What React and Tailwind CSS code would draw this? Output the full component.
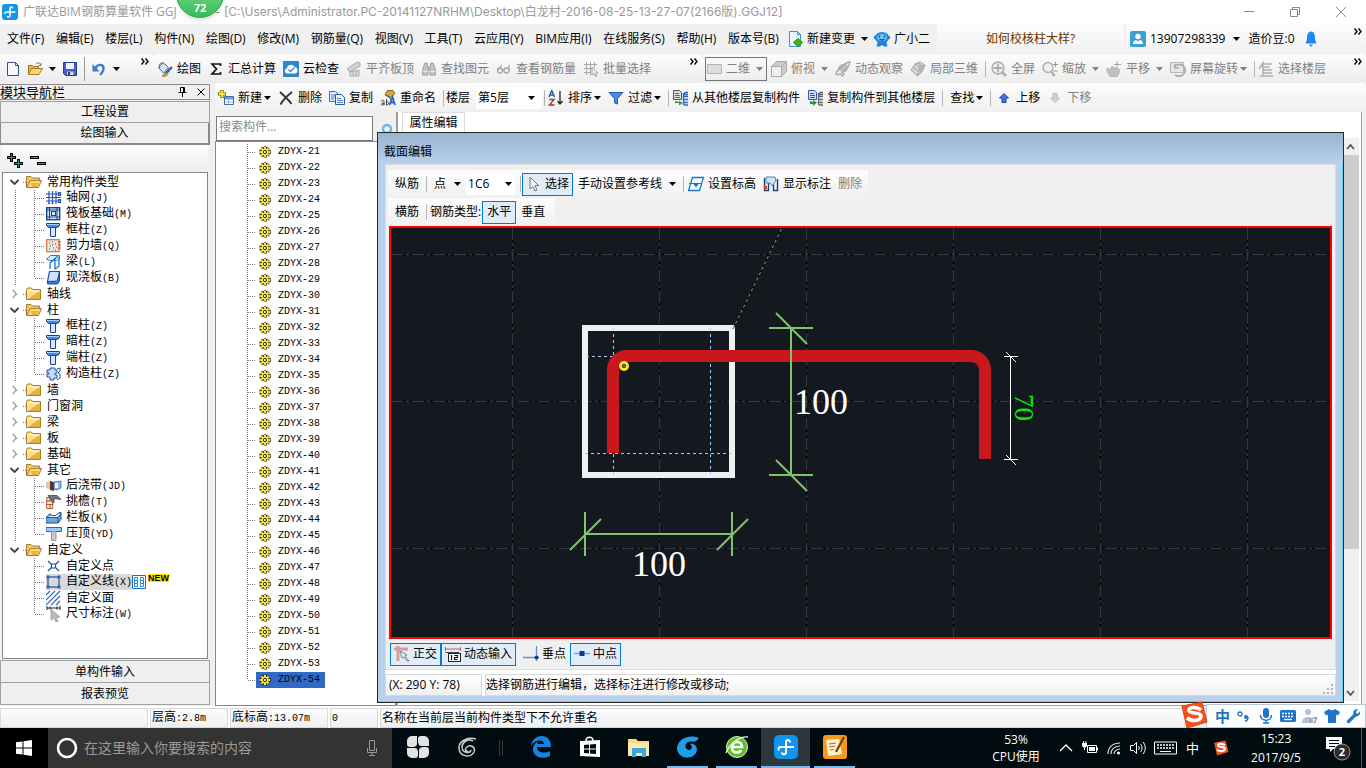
import React, { useState } from 'react';

// 16x16 drawings shared by the toolbars and trees
const icons = {
  app: (
    <>
      <rect width="16" height="16" rx="3" fill="#1495ea" />
      <path d="M10.5 4.5C10.5 2.5 8 2.500 8 4.5V11.5C8 13.5 5.5 13.5 5.5 12M3 10C2.500 8 3.500 8 5 8H13.500" fill="none" stroke="#fff" strokeWidth="1.5" />
    </>
  ),
  doc: <path d="M2.5 1.5h8l3 3v10h-11zM10.5 1.5v3h3" fill="#f4f8ff" stroke="#3d4f7c" />,
  open: (
    <>
      <path d="M1.5 13V4.5h4l1 1h5V7" fill="#e8b94c" stroke="#9a7420" />
      <path d="M1.5 13.5L4.5 7.5h11l-3.5 6z" fill="#fbd972" stroke="#a37c25" />
      <path d="M9 3c2-2 4-1 5 1m0-2v2.5h-2.5" fill="none" stroke="#66768e" />
    </>
  ),
  save: (
    <>
      <path d="M1.5 1.5h13v13h-11l-2-2z" fill="#4b5cc4" stroke="#2c3b8f" />
      <path d="M4 2h8v6H4z" fill="#eef1ff" />
      <path d="M5 10.5h6.5V14H5z" fill="#cfd4ea" />
      <path d="M6 11h2v3H6z" fill="#2c3b8f" />
    </>
  ),
  undo: (
    <>
      <path d="M4.5 7.5C6 3 12 2.5 12.5 7c.3 3-1.5 5-3.5 7" fill="none" stroke="#3f78cf" strokeWidth="2.4" />
      <path d="M1.5 3v7.5h7z" fill="#3f78cf" />
    </>
  ),
  paint: (
    <>
      <path d="M1.5 6.5L6 1.5l5.5 5-5 5.5z" fill="#dbe5f5" stroke="#44699d" />
      <path d="M3 7C1 4 4 0 6.5 3" fill="none" stroke="#44699d" />
      <path d="M11 7c2 1 2 4 1 5-1-1-2-3-1-5z" fill="#4d86d6" />
      <path d="M15 6l-7 7" stroke="#2f63b5" strokeWidth="2.4" />
      <path d="M9 11.5l2 2-4 2.5-2-1z" fill="#d8a73c" stroke="#7b5b1b" strokeWidth=".6" />
    </>
  ),
  sigma: <path d="M12.5 5V3H4l4.5 5L4 13h8.500v-2" fill="none" stroke="#111" strokeWidth="1.7" />,
  cloud: (
    <>
      <rect width="16" height="16" rx="1" fill="#2a87cc" />
      <path d="M4.5 12.5C1 12.5 1 8 4 7.5c0-4 6-5 7.5-1.5 4 0 4 6.5.5 6.5z" fill="#fff" />
      <path d="M5.5 8.5l2 2 4-4" fill="none" stroke="#2a87cc" strokeWidth="1.4" />
    </>
  ),
  slab: (
    <>
      <path d="M1 8L11 1l3 1v3L4 11z" fill="#d2d2d2" stroke="#aaa" />
      <path d="M4 11v4h9V9l-9 2zM7 10.5V15M10 9.5V15" fill="#dedede" stroke="#a8a8a8" />
    </>
  ),
  find: (
    <>
      <path d="M2 7l2-5h2l1 4v8H1.5zM14 7l-2-5h-2L9 6v8h5.5z" fill="#c6c6c6" stroke="#9c9c9c" />
      <path d="M7 6h2v3H7z" fill="#aaa" />
      <path d="M2 10.5h4.5M9.5 10.5H14" stroke="#eee" />
    </>
  ),
  glasses: (
    <>
      <circle cx="4" cy="9.5" r="2.5" fill="none" stroke="#a3a3a3" strokeWidth="1.3" />
      <circle cx="10.5" cy="9.5" r="2.5" fill="none" stroke="#a3a3a3" strokeWidth="1.3" />
      <path d="M2 9L6 4M13 9V4M6.5 9H8" fill="none" stroke="#a3a3a3" strokeWidth="1.2" />
    </>
  ),
  batch: (
    <>
      <path d="M1 3.5h13M1 7.5h10M1 11.5h7M3.5 1v13M7.5 1v13M11.5 1v6" stroke="#a9a9a9" fill="none" />
      <path d="M9 6l6 6h-2.5l1.5 3-1.5.5-1.5-3L9 14z" fill="#eee" stroke="#999" strokeWidth=".8" />
    </>
  ),
  flat: <path d="M1.5 3.5h14v9h-14z" fill="#dedede" stroke="#b2b2b2" />,
  cube: (
    <>
      <path d="M.5 5.5h10v10H.5z" fill="#f0f0f0" stroke="#a9a9a9" />
      <path d="M.5 5.5l5-5h10l-5 5zM10.5 15.5l5-5V.5l-5 5z" fill="#cbcbcb" stroke="#a9a9a9" />
    </>
  ),
  orbit: (
    <>
      <path d="M4 5c3-3 8-3 9 0 1 4-3 7-6 6S2 8 4 5z" fill="#bdbdbd" />
      <path d="M15 1C11 1 2 8 1 13c3 3 13-5 14-12zM9 12c0 2-1 3-3 3" fill="none" stroke="#a6a6a6" strokeWidth="1.3" />
    </>
  ),
  part3d: (
    <>
      <path d="M1 9l4-6 5-2 5 3-3 7-5 4z" fill="#d4d4d4" stroke="#a6a6a6" />
      <path d="M5 3l5 3 5-2M10 6l-3 9M3 6l5 4 6-3M7.5 2l5 3-3 8" fill="none" stroke="#a6a6a6" />
    </>
  ),
  full: (
    <>
      <circle cx="7" cy="7" r="6" fill="#ededed" stroke="#ababab" strokeWidth="1.3" />
      <path d="M11 11l4 4" stroke="#ababab" strokeWidth="2.5" />
      <path d="M7 2.5v9M2.5 7h9" stroke="#999" strokeWidth="1.3" />
    </>
  ),
  zoom: (
    <>
      <circle cx="6" cy="6.5" r="5" fill="#ededed" stroke="#ababab" strokeWidth="1.3" />
      <path d="M9.5 11l3 4" stroke="#ababab" strokeWidth="2.5" />
      <path d="M13.5 1v5M11 3.500h5M11.5 10h4" stroke="#999" />
    </>
  ),
  pan: (
    <>
      <path d="M1 8c1-2 2 0 4 1 0-5 2-5 3-1 1-2 3-1 3 0 2-1 3 1 2 4l-2 4H5C3 13 0 11 1 8z" fill="#c0c0c0" stroke="#a3a3a3" strokeWidth=".7" />
      <path d="M11 0v7M8 3.500h7" stroke="#a3a3a3" />
    </>
  ),
  rotate: (
    <>
      <path d="M.5 1.500h13v10H.5z" fill="#e6e6e6" stroke="#b5b5b5" />
      <path d="M5 14c6 3 11-1 10-6-1-5-8-6-10-2m0-3v4h4" fill="none" stroke="#aaa" strokeWidth="1.7" />
    </>
  ),
  floors: <path d="M5 3h9M4 6h8M5 9h9M5 12h9M3 15h12M1 8l4-6v13H1.5" fill="none" stroke="#b0b0b0" strokeWidth="1.5" />,
  create: (
    <>
      <path d="M6.5 6.5h9v8h-9z" fill="#fff" stroke="#3c66a8" />
      <path d="M7 7h8v2.500H7z" fill="#6d9be0" />
      <path d="M7 12h8M10.5 9v5.500" stroke="#9ab6df" />
      <path d="M4 0v8M0 4h8" stroke="#9a7b00" strokeWidth="3.6" />
      <path d="M4 1v6M1 4h6" stroke="#ffe34d" strokeWidth="2" />
    </>
  ),
  cross: <path d="M2 2c3 3 8 7 11.500 12M14 2C9 6 5 10 2.500 14.500" fill="none" stroke="#333" strokeWidth="1.9" />,
  copy: (
    <>
      <path d="M.5 1.5h6l3 3v7h-9z" fill="#e1edff" stroke="#4168ad" />
      <path d="M6.5 4.5h6l3 3v7h-9z" fill="#eff6ff" stroke="#31579c" />
      <path d="M2 5h4M2 7h4M2 9h3M8 8.5h4M8 10.5h6M8 12.5h6" stroke="#4f80cf" />
    </>
  ),
  rename: (
    <>
      <path d="M5 4.500L7.500 .5H13l2 3-4 4z" fill="#d9a531" stroke="#6b5215" strokeWidth=".8" />
      <path d="M5 5l4 2 3 4" fill="none" stroke="#555" />
      <path d="M1 11.5c1-2 3-1.500 3 0V15M4 13c-3 0-3.500 2-1.500 2S4 14 4 13M6.5 9v6c3 0 3-4 0-3.500" fill="none" stroke="#444" />
      <path d="M9.5 15l3-8 2.500 8M10.5 12.5h4" fill="none" stroke="#2465c4" strokeWidth="1.8" />
    </>
  ),
  sort: (
    <>
      <path d="M1 7l2.800-6.500L6.500 7M2.500 5h3" fill="none" stroke="#2d549f" strokeWidth="1.4" />
      <path d="M1.500 9.500H6l-4.500 5.500H6.500" fill="none" stroke="#a33636" strokeWidth="1.4" />
      <path d="M12 1v12M9.5 11l2.500 3 2.500-3" fill="none" stroke="#222" strokeWidth="1.3" />
    </>
  ),
  funnel: <path d="M1 2.500h14L9.500 8.500V14L6.500 13V8.500z" fill="#4c8be8" stroke="#2459ab" />,
  fromFloor: (
    <>
      <path d="M1.5 .5h6l2 2v7h-8z" fill="#ddd" stroke="#555" />
      <path d="M3 3.5h4M3 5.5h5M3 7.5h5" stroke="#666" />
      <path d="M16 2.5h-3l-1 2h4M16 6.5h-4M16 9.5h-4M16 12.5h-4M16 15h-4M11.5 3v12" fill="none" stroke="#3367bd" strokeWidth="1.4" />
      <path d="M3 11v2h4v2.500L10.500 13 7 10.500V12" fill="#1e9d3a" />
    </>
  ),
  toFloor: (
    <>
      <path d="M1.5 .5h6l2 2v7h-8z" fill="#cfe0ff" stroke="#2e57b5" />
      <path d="M3 3.5h4M3 5.5h5M3 7.5h5" stroke="#2e57b5" />
      <path d="M16 2.5h-3l-1 2h4M16 6.5h-4M16 9.5h-4M16 12.5h-4M16 15h-4M11.5 3v12" fill="none" stroke="#666" strokeWidth="1.4" />
      <path d="M3 11v3h3v2l4-3.500L6 10v2" fill="#1e9d3a" />
    </>
  ),
  up: <path d="M8 3.500l4.500 4.500H10v4.500H6V8H3.500z" fill="#3f77e0" stroke="#1d4aa5" />,
  down: <path d="M8 12.500L3.500 8H6V3.500h4V8h2.500z" fill="#d0d0d0" stroke="#b9b9b9" />,
  change: (
    <>
      <path d="M2.5 .5h8l3 3v12h-11z" fill="#e9f6fd" stroke="#3c92c4" />
      <path d="M10.5 .5v3h3" fill="none" stroke="#3c92c4" />
      <path d="M11 7.500l4.500 4-4.500 4-4.500-4z" fill="#48b41c" stroke="#2c7b0d" />
    </>
  ),
  mascot: (
    <>
      <path d="M0 5h2v3H0zM14 5h2v3h-2z" fill="#1c86d8" />
      <ellipse cx="8" cy="6.5" rx="7" ry="5.5" fill="#1c86d8" />
      <path d="M4 9h8l1.500 6.500H10L8 14l-2 1.500H2.500z" fill="#1c86d8" />
      <ellipse cx="8" cy="6.5" rx="5" ry="3.5" fill="#6fc4f7" />
      <path d="M5.500 4.500v2M10.500 4.500v2M5.500 8q2.500 2 5 0" fill="none" stroke="#0b4c86" strokeWidth="1.3" />
    </>
  ),
  user: (
    <>
      <rect width="16" height="16" rx="2" fill="#3a9fd3" />
      <circle cx="8" cy="5.5" r="2.7" fill="#fff" />
      <path d="M3 13c0-3 2-4 3-4l2 1.500L10 9c1 0 3 1 3 4z" fill="#fff" />
    </>
  ),
  bell: <path d="M8 .5C4.500 1 4 4 4 8c0 2-1.500 3-1.500 4.500h11C13.500 11 12 10 12 8c0-4-.5-7-4-7.500zM6 13.500h4L8 16z" fill="#1e88f5" />,
  folder: (
    <>
      <path d="M.5 3.5l1-1.500h4l1 1.500h8v10H.5z" fill="#fbe08f" stroke="#a67c2b" />
      <path d="M14 4.500V13H2z" fill="#e9b13c" />
      <path d="M1 5h13" stroke="#fff3c4" />
    </>
  ),
  folderOpen: (
    <>
      <path d="M.5 13.500v-11h4.500l1.500 1.500h7v3" fill="#f0c86b" stroke="#a67c2b" />
      <path d="M.8 13.500L4 6.500h11.500l-3 7z" fill="#fbd979" stroke="#a67c2b" />
      <path d="M5 9h8l-2 4H6z" fill="#e9b445" />
    </>
  ),
  axis: (
    <path d="M3 1v13M6.5 1v13M10 1v13M0 4h15M0 7.500h15M0 11h15M12.5 2.500h2v3h-2zM12.5 9.500h2v3h-2zM2 13.500h2M5.5 13.500h2" fill="none" stroke="#2a50b8" strokeWidth="1.2" />
  ),
  raft: (
    <>
      <rect x=".7" y="1.7" width="13" height="12" fill="#dce9ff" stroke="#124a92" strokeWidth="1.4" />
      <path d="M1 4h13M1 11h13M3.500 2v12M11 2v12M5.500 5.500h4v4h-4z" fill="none" stroke="#124a92" strokeWidth="1.1" />
    </>
  ),
  column: (
    <>
      <path d="M.5 1.500h13v2l-2 2h-9l-2-2z" fill="#4a86e8" stroke="#19439a" />
      <path d="M1 2.500h12" stroke="#a9cbff" />
      <path d="M4.500 5.500h5v9h-5z" fill="#d8e8ff" stroke="#19439a" />
    </>
  ),
  shear: (
    <>
      <rect x=".7" y="1.7" width="12.500" height="12" fill="#e9e4e0" stroke="#d1763f" strokeWidth="1.2" />
      <path d="M3 5h1M6 4h1M9 6h1M4 8h1M7 10h1M10 9h1M3 11h1M6 7h1M9 12h1" stroke="#555" />
      <path d="M12 4h3M12 7h3M12 10h3" stroke="#b04c1b" />
    </>
  ),
  beam: (
    <>
      <path d="M.5 5l4-3.500h9v3l-3 2h-7z" fill="#d7ecff" stroke="#2079c8" />
      <path d="M5 8l7-6M4 15v-6l5-4v10l4-3V3" fill="none" stroke="#2079c8" strokeWidth="1.3" />
    </>
  ),
  cast: (
    <>
      <path d="M3.500 1.500h10l-2 10h-10z" fill="#cfe3ff" stroke="#1b4fb0" strokeWidth="1.2" />
      <path d="M1.500 11.500v2.500h10l2-3v-9l-2 9z" fill="#3c78dc" stroke="#1b4fb0" />
    </>
  ),
  structural: (
    <>
      <path d="M4 2h5v2h2v3H9v2h2v3H8v2H4v-3H1V8h2V7H1V4h3z" fill="#c4daf8" stroke="#26549f" />
      <path d="M11 3l3-1v3l-2 2 2 1v4l-3 2" fill="none" stroke="#26549f" />
    </>
  ),
  postcast: (
    <>
      <path d="M0 4l5-1v9l-5-2z" fill="#e2c4a9" />
      <path d="M4 3l4 1v9l-4-1z" fill="#5b3520" />
      <path d="M8 4l7-1v7l-4 2-3-1z" fill="#8fb6e8" stroke="#345f9e" strokeWidth=".7" />
      <path d="M9 5h3v5H9z" fill="#eef5ff" />
    </>
  ),
  eaves: (
    <>
      <path d="M.7 3.500h6v11h-6zM1 7h6M1 10.500h6M4 3.500V7M4 10.500V14" fill="#fbe3d4" stroke="#b5542a" />
      <path d="M2 1.500h9l4 4-7-1v4h-1z" fill="#777" stroke="#333" strokeWidth=".7" />
    </>
  ),
  rail: <path d="M0 7.500l4-4 2 2h4l3-3h2v7l-3 3.500H0zM12 7v6M0 7.500h12l3-4" fill="#6fa8dd" stroke="#1d558f" />,
  cap: (
    <>
      <path d="M0 1.500h15.500v4H0z" fill="#9dcbff" stroke="#2467b9" />
      <path d="M5.500 5.500h4.500v9H5.500z" fill="#c9c9c9" stroke="#999" />
    </>
  ),
  point: <path d="M2 3l3.500 3.500M13 3L9.500 6.500M2 13l3.500-3.500M13 13L9.500 9.500M5.500 6h4v4h-4z" fill="none" stroke="#1b4fa5" strokeWidth="1.2" />,
  line: (
    <>
      <rect x="2" y="3" width="11" height="10" fill="none" stroke="#1b4fa5" strokeWidth="1.2" />
      <path d="M.5 1.500h3v3h-3zM11.500 1.500h3v3h-3zM.5 11.500h3v3h-3zM11.500 11.500h3v3h-3z" fill="#2f63c4" />
    </>
  ),
  area: <path d="M0 5l4-4M0 10l9-9M0 15L14 1M5 15l9-9M10 15l4-4" stroke="#2b67c5" strokeWidth="1.1" />,
  measure: (
    <>
      <path d="M1 0v4M14 0v4M1 2h13M4 .5v3M11 .5v3" stroke="#222" />
      <path d="M5 3l9 8-4 .5 2 4-2 .5-2-4-3 2z" fill="#bbb" stroke="#888" strokeWidth=".6" />
    </>
  ),
  gear: (
    <>
      <circle cx="8" cy="8" r="5" fill="#111" />
      <path d="M8 2.500v11M2.500 8h11M4.200 4.200l7.600 7.600M11.800 4.200L4.200 11.800" stroke="#f6e62f" strokeWidth="2" />
      <circle cx="8" cy="8" r="5.5" fill="none" stroke="#222" strokeWidth=".8" strokeDasharray="2 1.500" />
      <circle cx="8" cy="8" r="3.6" fill="#f6e62f" />
      <circle cx="8" cy="8" r="1.600" fill="#fff" stroke="#222" />
    </>
  ),
  pointer: <path d="M4 1l8.500 8.500H9l2 4.500-2 1-2-4.500L4 13z" fill="#f2f2f2" stroke="#777" />,
  elevation: (
    <>
      <path d="M4.5 1.500h11l-4 13H.5z" fill="#f3f9ff" stroke="#1a7ac9" strokeWidth="1.3" />
      <path d="M1 7.500h13" stroke="#1a7ac9" />
      <path d="M5 7.500h6l-3 4z" fill="#1a7ac9" />
    </>
  ),
  annotate: (
    <>
      <path d="M1.500 2v12.500h4V7M10.500 6v8.500h4V3" fill="none" stroke="#1a3f78" strokeWidth="1.4" />
      <path d="M3 1h9l1 4-4 5-2-3-4 0z" fill="#cfe3f7" stroke="#5a7fa8" />
      <path d="M1 10h3v3H1z" fill="#c2401f" />
    </>
  ),
  ortho: (
    <>
      <path d="M0 3h14M4 0v15" stroke="#d89a9a" strokeWidth="3" />
      <path d="M6 5l7 4-2 1 4 5h-2l-3-4-2 1z" fill="#eee" stroke="#667" strokeWidth=".8" />
    </>
  ),
  dynamic: (
    <>
      <path d="M0 3h16M.5 1v4M15.500 1v4" stroke="#c55a5a" />
      <rect x="3.500" y="7.500" width="12" height="8" fill="#fff" stroke="#222" />
      <path d="M6.500 9v5M9.500 9.500h3v2h-3v2h3" fill="none" stroke="#111" strokeWidth="1.2" />
      <path d="M.5 6.500H14" fill="none" stroke="#444" />
    </>
  ),
  perp: (
    <>
      <path d="M0 11.500h16M13.500 0v15" stroke="#6d8fc4" strokeWidth="1.3" />
      <circle cx="13.500" cy="11.500" r="2" fill="#0b3a94" />
    </>
  ),
  mid: (
    <>
      <path d="M0 7.500h16" stroke="#6d9bd0" strokeWidth="1.3" />
      <path d="M5.500 5h5v5h-5z" fill="#0b3a94" />
    </>
  ),
};

function Icon({ name, className = 'size-4' }) {
  return (
    <svg viewBox="0 0 16 16" className={`${className} shrink-0`} aria-hidden="true">
      {icons[name]}
    </svg>
  );
}

const Arrow = ({ className = '' }) => (
  <svg viewBox="0 0 7 4" className={`w-[7px] h-1 shrink-0 ${className}`} aria-hidden="true">
    <path d="M0 0h7L3.500 4z" fill="currentColor" />
  </svg>
);

const Sep = ({ className = '-mr-0.5' }) => <span className={`w-px h-4 bg-[#b5b5b5] shrink-0 ${className}`} />;

const More = ({ className = '' }) => (
  <button type="button" aria-label="更多" className={`self-start pt-1 shrink-0 ${className}`}>
    <svg viewBox="0 0 8 7" className="w-2 h-[7px]">
      <path d="M.5 .5L3 3.500.5 6.500M4.500 .5L7 3.500 4.500 6.500" fill="none" stroke="#000" strokeWidth="1.400" />
    </svg>
  </button>
);

function Tool({ icon, label, arrow, disabled }) {
  return (
    <button
      type="button"
      disabled={disabled}
      className={`flex items-center gap-1 shrink-0 whitespace-nowrap ${disabled ? 'text-[#808080]' : 'text-black'}`}
    >
      {icon && <Icon name={icon} />}
      {label}
      {arrow && <Arrow className={arrow === 'wide' ? 'ml-0.5' : '-ml-0.5'} />}
    </button>
  );
}

// Latin runs are set in the half-width mono face, the rest stays full width
function Sim({ children }) {
  return children.split(/([\x20-\x7e]+)/).map((part, i) =>
    i % 2 ? <span key={i} className="font-['Liberation_Mono',monospace] text-[10px]">{part}</span> : part
  );
}

const menus = [
  '文件(F)', '编辑(E)', '楼层(L)', '构件(N)', '绘图(D)', '修改(M)', '钢筋量(Q)',
  '视图(V)', '工具(T)', '云应用(Y)', 'BIM应用(I)', '在线服务(S)', '帮助(H)', '版本号(B)',
];

const tree = [
  { label: '常用构件类型', items: [['axis', '轴网(J)'], ['raft', '筏板基础(M)'], ['column', '框柱(Z)'], ['shear', '剪力墙(Q)'], ['beam', '梁(L)'], ['cast', '现浇板(B)']] },
  { label: '轴线' },
  { label: '柱', items: [['column', '框柱(Z)'], ['column', '暗柱(Z)'], ['column', '端柱(Z)'], ['structural', '构造柱(Z)']] },
  { label: '墙' },
  { label: '门窗洞' },
  { label: '梁' },
  { label: '板' },
  { label: '基础' },
  { label: '其它', items: [['postcast', '后浇带(JD)'], ['eaves', '挑檐(T)'], ['rail', '栏板(K)'], ['cap', '压顶(YD)']] },
  { label: '自定义', items: [['point', '自定义点'], ['line', '自定义线(X)'], ['area', '自定义面'], ['measure', '尺寸标注(W)']] },
];

const components = Array.from({ length: 34 }, (_, i) => `ZDYX-${21 + i}`);

function TitleBar() {
  return (
    <header className="relative flex items-center h-6 shrink-0 bg-white text-[#999] pl-0.5">
      <Icon name="app" />
      <h1 className="flex ml-[5px] whitespace-nowrap">
        <span className="w-48">广联达BIM钢筋算量软件 GGJ</span>
        <span className="font-['Inter','Noto_Sans_CJK_SC',sans-serif]">
          - [C:\Users\Administrator.PC-20141127NRHM\Desktop\白龙村-2016-08-25-13-27-07(2166版).GGJ12]
        </span>
      </h1>
      <div className="ml-auto flex items-center gap-[34px] pr-[19px]">
        <button type="button" aria-label="最小化" className="w-3 h-3">
          <svg viewBox="0 0 12 12" className="size-3"><path d="M1 5.500h10" stroke="#888" /></svg>
        </button>
        <button type="button" aria-label="还原" className="w-3 h-3">
          <svg viewBox="0 0 12 12" className="size-3"><path d="M1.500 3.500h7v7h-7zM3.500 3V1.500h7v7H9" fill="none" stroke="#888" /></svg>
        </button>
        <button type="button" aria-label="关闭" className="w-3 h-3">
          <svg viewBox="0 0 12 12" className="size-3"><path d="M1 1l10 10M11 1L1 11" stroke="#888" /></svg>
        </button>
      </div>
      <div className="absolute left-44 -top-[30px] z-10 size-12 rounded-full bg-linear-to-b from-[#8be29c] to-[#2fbe58] border border-[#36a34c] shadow-md flex items-end justify-center pb-1 text-white font-bold text-[11px]/[11px]">
        72
      </div>
    </header>
  );
}

function MenuBar() {
  return (
    <nav className="flex items-stretch h-[30px] shrink-0">
      <div className="flex items-center pl-[7px] w-[937px] shrink-0">
        <div className="flex justify-between w-[772px] shrink-0 mr-2">
          {menus.map((m) => (
            <button key={m} type="button" className="whitespace-nowrap">{m}</button>
          ))}
        </div>
        <Tool icon="change" label="新建变更" arrow="wide" />
        <span className="ml-1.5"><Tool icon="mascot" label="广小二" /></span>
      </div>
      <div className="flex items-center justify-center w-[187px] shrink-0 rounded bg-linear-to-b from-[#fcfcfc] to-[#f1f1f1] text-[#663300]">
        如何校核柱大样?
      </div>
      <div className="flex items-center flex-1 ml-0.5 pl-1 rounded bg-linear-to-b from-[#fcfcfc] to-[#f1f1f1]">
        <Tool icon="user" label="13907298339" />
        <Arrow className="ml-2 mr-2" />
        <span className="whitespace-nowrap">造价豆:0</span>
        <button type="button" aria-label="消息" className="ml-2"><Icon name="bell" /></button>
        <More className="ml-auto mr-1" />
      </div>
    </nav>
  );
}

function MainToolbar() {
  return (
    <div className="flex items-stretch h-[29px] shrink-0">
      <div className="flex items-center w-[153px] shrink-0 pl-[5px] rounded bg-linear-to-b from-[#fcfcfc] to-[#ececec]">
        <button type="button" aria-label="新建"><Icon name="doc" /></button>
        <button type="button" aria-label="打开" className="ml-1.5 flex items-center gap-1.5"><Icon name="open" /><Arrow /></button>
        <button type="button" aria-label="保存" className="ml-1.5"><Icon name="save" /></button>
        <span className="ml-1.5 w-px h-6 bg-[#999]" />
        <button type="button" aria-label="撤销" className="ml-1.5 flex items-center gap-1.5"><Icon name="undo" /><Arrow /></button>
        <More className="ml-auto mr-1" />
      </div>
      <div className="flex items-center w-[549px] shrink-0 gap-[7px] pl-1 rounded bg-linear-to-b from-[#fcfcfc] to-[#ececec]">
        <Tool icon="paint" label="绘图" />
        <Tool icon="sigma" label="汇总计算" />
        <Tool icon="cloud" label="云检查" />
        <Tool icon="slab" label="平齐板顶" disabled />
        <Tool icon="find" label="查找图元" disabled />
        <Tool icon="glasses" label="查看钢筋量" disabled />
        <Tool icon="batch" label="批量选择" disabled />
        <More className="ml-auto mr-1" />
      </div>
      <div className="flex items-center flex-1 gap-[7px] pl-[3px] rounded bg-linear-to-b from-[#fcfcfc] to-[#ececec]">
        <span className="flex items-center h-6 w-[62px] -mr-[3px] border border-[#777] shrink-0">
          <Tool icon="flat" label="二维" arrow="wide" disabled />
        </span>
        <Tool icon="cube" label="俯视" arrow="wide" disabled />
        <Tool icon="orbit" label="动态观察" disabled />
        <Tool icon="part3d" label="局部三维" disabled />
        <Sep />
        <Tool icon="full" label="全屏" disabled />
        <Tool icon="zoom" label="缩放" arrow="wide" disabled />
        <Tool icon="pan" label="平移" arrow="wide" disabled />
        <Tool icon="rotate" label="屏幕旋转" arrow disabled />
        <Sep className="-mr-1" />
        <Tool icon="floors" label="选择楼层" disabled />
        <More className="ml-auto mr-1" />
      </div>
    </div>
  );
}

function TreeRow({ open, last, icon, label, selected, parentLast }) {
  if (icon) {
    return (
      <li className="flex items-center h-4">
        <svg className="w-[43px] h-4 shrink-0" aria-hidden="true">
          <path
            d={`${parentLast ? '' : 'M12.5 0V16'}M31.5 0V${last ? 8 : 16}M32 8.5H42`}
            fill="none" stroke="#777" strokeDasharray="1 1"
          />
        </svg>
        <span className={`flex items-center h-4 gap-1 ${selected ? 'bg-[#d9d9d9]' : ''}`}>
          <Icon name={icon} />
          <span className="whitespace-nowrap"><Sim>{label}</Sim></span>
        </span>
        {selected && (
          <>
            <svg viewBox="0 0 14 14" className="size-3.5 shrink-0" aria-hidden="true">
              <path d="M.5 .5h13v13H.5z" fill="#fff" stroke="#1b6bb8" />
              <path d="M2.500 2.500h3v9h-3zM8.500 2.500h3v9h-3zM3 5.500h2M3 8.500h2M9 5.500h2M9 8.500h2" fill="none" stroke="#2b8be0" />
            </svg>
            <span className="self-start ml-0.5 bg-[#ffe000] text-[9px]/[8px] font-bold font-['Liberation_Sans',sans-serif]">NEW</span>
          </>
        )}
      </li>
    );
  }
  return (
    <li className="flex items-center h-4">
      <svg viewBox="0 0 23 16" className="w-[23px] h-4 shrink-0" aria-hidden="true">
        {open
          ? <path d="M7.500 6l4 4 4-4" fill="none" stroke="#444" strokeWidth="1.800" />
          : <path d="M9.500 4l4 4-4 4" fill="none" stroke="#a5a5a5" strokeWidth="1.600" />}
        <path d="M20 8.500h3" stroke="#777" strokeDasharray="1 1" />
      </svg>
      <Icon name={open ? 'folderOpen' : 'folder'} />
      <span className="ml-[5px] whitespace-nowrap">{label}</span>
    </li>
  );
}

function NavPanel() {
  return (
    <aside className="flex flex-col w-[210px] shrink-0 pb-px">
      <div className="flex items-center h-4 mt-px border border-[#8a8a8a] border-l-0 text-[13px]/[14px]">
        模块导航栏
        <svg viewBox="0 0 9 10" className="w-[9px] h-2.5 ml-auto mr-2.5" aria-hidden="true">
          <path d="M2.500 .5h4v5h-4zM5.500 1v4M.5 5.500h8M4.500 6v4" fill="none" stroke="#000" />
        </svg>
        <button type="button" aria-label="关闭" className="mr-1">
          <svg viewBox="0 0 8 8" className="size-2"><path d="M.5 .5l7 7M7.500 .5l-7 7" stroke="#000" /></svg>
        </button>
      </div>
      <button type="button" className="h-[22px] mt-px shrink-0 border border-[#a0a0a0] bg-[#efefef]">工程设置</button>
      <button type="button" className="h-[22px] shrink-0 border border-t-0 border-r-2 border-b-2 border-[#8a8a8a] bg-[#efefef]">绘图输入</button>
      <div className="flex flex-col flex-1 min-h-0 pl-0.5 pr-0.5">
        <div className="flex items-center h-[27px] shrink-0 pt-1 pl-[5px] bg-linear-to-b from-[#fdfdfd] to-[#ededed]">
          <button type="button" aria-label="展开">
            <svg viewBox="0 0 16 16" className="size-4">
              <path d="M4.500 0v9M0 4.500h9M11.500 6v9M7 10.500h9" stroke="#000" strokeWidth="3" />
              <path d="M4.500 1v7M1 4.500h7M11.500 7v7M8 10.500h7" stroke="#1a9a8c" />
            </svg>
          </button>
          <button type="button" aria-label="折叠" className="ml-[7px]">
            <svg viewBox="0 0 16 16" className="size-4">
              <path d="M0 4.500h9M7 10.500h9" stroke="#000" strokeWidth="3" />
              <path d="M1 4.500h7M8 10.500h7" stroke="#1a9a8c" />
            </svg>
          </button>
        </div>
        <ul className="flex-1 min-h-0 pt-px overflow-hidden border border-[#828790] bg-white">
          {tree.map((group, g) => (
            <React.Fragment key={g}>
              <TreeRow label={group.label} open={!!group.items} />
              {(group.items || []).map(([icon, label], i) => (
                <TreeRow
                  key={label}
                  icon={icon}
                  label={label}
                  last={i === group.items.length - 1}
                  parentLast={g === tree.length - 1}
                  selected={label === '自定义线(X)'}
                />
              ))}
            </React.Fragment>
          ))}
        </ul>
      </div>
      <button type="button" className="h-[22px] mt-px shrink-0 border border-b-0 border-[#a0a0a0] bg-[#efefef]">单构件输入</button>
      <button type="button" className="h-[23px] shrink-0 border border-[#a0a0a0] bg-[#efefef]">报表预览</button>
    </aside>
  );
}

function ComponentToolbar() {
  return (
    <div className="flex items-center h-[29px] shrink-0 gap-[7px] pl-[3px] rounded bg-linear-to-b from-[#fcfcfc] to-[#efefef]">
      <Tool icon="create" label="新建" arrow />
      <Tool icon="cross" label="删除" />
      <Tool icon="copy" label="复制" />
      <Tool icon="rename" label="重命名" />
      <Sep className="-mr-[5px]" />
      <label htmlFor="floor" className="-mr-px whitespace-nowrap">楼层</label>
      <span className="relative flex items-center">
        <select id="floor" defaultValue="第5层" className="appearance-none w-[66px] h-[22px] pl-0.5 bg-white">
          <option>第5层</option>
        </select>
        <Arrow className="absolute right-[7px] pointer-events-none" />
      </span>
      <Sep className="-ml-[5px] -mr-1" />
      <Tool icon="sort" label="排序" arrow />
      <Tool icon="funnel" label="过滤" arrow />
      <Sep className="-mr-1" />
      <Tool icon="fromFloor" label="从其他楼层复制构件" />
      <Tool icon="toFloor" label="复制构件到其他楼层" />
      <Sep className="" />
      <Tool label="查找" arrow />
      <Sep />
      <Tool icon="up" label="上移" />
      <Tool icon="down" label="下移" disabled />
    </div>
  );
}

function ComponentList() {
  const [query, setQuery] = useState('');
  return (
    <div className="flex flex-col w-[183px] shrink-0 border-r-2 border-[#a0a0a0]">
      <div className="flex items-center gap-2 mt-1 pl-px shrink-0">
        <input
          type="text"
          aria-label="搜索构件"
          placeholder="搜索构件..."
          value={query}
          onChange={(e) => setQuery(e.target.value)}
          className="w-[157px] h-[25px] pl-0.5 pb-1 bg-white border border-[#7a7a7a] placeholder:text-[#8a8a8a]"
        />
        <svg viewBox="0 0 12 12" className="size-3" aria-hidden="true">
          <circle cx="6" cy="6" r="4" fill="#eaf6ff" stroke="#6cb5ea" strokeWidth="2.500" />
        </svg>
      </div>
      <ul className="flex-1 min-h-0 pt-0.5 overflow-hidden border border-[#828790] bg-white">
        {components.map((name, i) => {
          const active = i === components.length - 1;
          return (
            <li key={name} className="flex items-center h-4">
              <svg className="w-10 h-4 shrink-0" aria-hidden="true">
                <path d={`M31.5 0V${active ? 8 : 16}M32 8.5H40`} fill="none" stroke="#777" strokeDasharray="1 1" />
              </svg>
              <span className={`flex items-center h-4 w-[69px] ${active ? 'bg-[#316ac5]' : ''}`}>
                <Icon name="gear" className="size-4 ml-px" />
                <span className="ml-[5px] font-['Liberation_Mono',monospace] text-[10px]">{name}</span>
              </span>
            </li>
          );
        })}
      </ul>
    </div>
  );
}

function Drawing() {
  const columns = [121.5, 268.5, 415.5, 562.5, 709.5, 856.5];
  const rows = [26.5, 173.5, 320.5];
  return (
    <svg className="block w-full h-full bg-[#14181f]" role="img" aria-label="截面">
      {/* grid */}
      {columns.map((x) => (
        <g key={x}>
          <line x1={x} x2={x} y1="0" y2="100%" stroke="#000" />
          <line x1={x} x2={x} y1="0" y2="100%" stroke="#343842" strokeDasharray="12 3 3 3" />
        </g>
      ))}
      {rows.map((y) => (
        <g key={y}>
          <line x1="0" x2="100%" y1={y} y2={y} stroke="#000" />
          <line x1="0" x2="100%" y1={y} y2={y} stroke="#343842" strokeDasharray="12 3 3 3" />
        </g>
      ))}

      <rect x="194" y="100" width="147" height="147" fill="none" stroke="#f0f0f0" strokeWidth="6" />
      <path d="M222.5 100V247M319.5 100V247M195 128.5H222M194 225.5H341" fill="none" stroke="#a9cdf2" strokeDasharray="3 3" />
      <path d="M342 101L391 0" stroke="#000" />
      <path d="M342 101L391 0" stroke="#999" strokeDasharray="3 3" />

      {/* rebar */}
      <path d="M222 225V142A14 14 0 0 1 236 128H580A14 14 0 0 1 594 142V231" fill="none" stroke="#c8181e" strokeWidth="12" />
      <circle cx="233" cy="138" r="3.5" fill="#14181f" stroke="#ffe326" strokeWidth="3" />
      <path d="M232 138h2" stroke="#ffe326" />

      <g fill="none" stroke="#7fc36a" strokeWidth="2">
        <path d="M400 100V247M378 100H422M378 247H422M385 85L416 116M385 232L416 263" />
        <path d="M194 306H341M194 284V328M341 284V328M179 322L210 291M326 322L357 291" />
      </g>
      <g fill="#fff" className="font-['Liberation_Serif',serif] text-[36px]">
        <text x="403" y="186">100</text>
        <text x="241" y="348">100</text>
      </g>

      <path d="M619.5 128V232M613 128.5H627M613 231.5H627M615 124L625 134M615 227L625 237" fill="none" stroke="#fff" />
      <text transform="translate(624 166) rotate(90)" fill="#00f000" className="font-['Liberation_Serif',serif] text-[27px]">70</text>
    </svg>
  );
}

function Toggle({ icon, label, on, className = 'px-1' }) {
  return (
    <button
      type="button"
      aria-pressed={on}
      className={`flex items-center gap-[3px] h-[23px] border whitespace-nowrap ${className} ${on ? 'border-[#0078d7] bg-[#e0ecf7]' : 'border-transparent'}`}
    >
      {icon && <Icon name={icon} />}
      {label}
    </button>
  );
}

function SectionEditor() {
  return (
    <section
      role="dialog"
      aria-label="截面编辑"
      className="absolute left-[162px] right-[22px] top-[49px] bottom-[3px] flex flex-col border border-[#262626] bg-[#b9d1ea] pb-1.5 shadow-[inset_0_-1px_0_#5fd0f0,inset_-1px_0_0_#5fd0f0]"
    >
      <h2 className="flex items-center h-[31px] shrink-0 pl-1.5 pt-1.5 bg-linear-to-b from-[#99b4d1] to-[#b9d1ea]">截面编辑</h2>
      <div className="flex flex-col flex-1 min-h-0 mx-[7px] border border-[#dcdcdc] bg-[#f0f0f0]">
        <div className="flex items-center self-start gap-[7px] h-7 mt-[5px] ml-0.5 pl-[7px] pr-1.5 shrink-0 bg-linear-to-b from-[#fcfcfc] to-[#f0f0f0]">
          <Tool label="纵筋" />
          <Sep className="" />
          <button type="button" className="flex items-center gap-2">点<Arrow /></button>
          <span className="relative flex items-center -ml-0.5">
            <select aria-label="钢筋规格" defaultValue="1C6" className="appearance-none w-[49px] h-[22px] pl-0.5 bg-white">
              <option>1C6</option>
            </select>
            <Arrow className="absolute right-[3px] pointer-events-none" />
          </span>
          <Sep className="-ml-0.5 -mr-1.5" />
          <Toggle icon="pointer" label="选择" on className="px-[3px]" />
          <button type="button" className="flex items-center gap-[7px] -ml-0.5 whitespace-nowrap">手动设置参考线<Arrow /></button>
          <Sep className="-mr-[3px]" />
          <Tool icon="elevation" label="设置标高" />
          <Tool icon="annotate" label="显示标注" />
          <Tool label="删除" disabled />
        </div>
        <div className="flex items-center self-start h-7 ml-0.5 pl-[7px] pr-[5px] shrink-0 bg-linear-to-b from-[#fcfcfc] to-[#f0f0f0]">
          <Tool label="横筋" />
          <Sep className="ml-[7px] mr-[3px]" />
          <span className="flex items-center mr-px whitespace-nowrap">钢筋类型:</span>
          <Toggle label="水平" on />
          <Toggle label="垂直" />
        </div>
        <div className="flex-1 min-h-0 mx-[3px] border-2 border-[#f00]">
          <Drawing />
        </div>
        <div className="flex items-center h-[30px] shrink-0 ml-1">
          <Toggle icon="ortho" label="正交" on className="px-[3px]" />
          <Toggle icon="dynamic" label="动态输入" on className="px-[3px]" />
          <Toggle icon="perp" label="垂点" className="ml-1 px-0.5" />
          <Toggle icon="mid" label="中点" on className="ml-px px-[3px]" />
        </div>
      </div>
      <footer className="flex gap-[3px] h-[26px] pt-1 shrink-0 mx-[7px] bg-white">
        <span className="flex items-center w-[97px] pl-[3px] border border-[#d8d8d8] bg-linear-to-b from-white to-[#f0f0f0]">(X: 290 Y: 78)</span>
        <span className="flex items-center flex-1 border border-[#d8d8d8] bg-linear-to-b from-white to-[#f0f0f0]">
          选择钢筋进行编辑，选择标注进行修改或移动;
          <svg viewBox="0 0 12 12" className="size-3 ml-auto self-end" aria-hidden="true">
            <path d="M8 1h2v2H8zM4 5h2v2H4zM8 5h2v2H8zM0 9h2v2H0zM4 9h2v2H4zM8 9h2v2H8z" fill="#b5b5b5" />
          </svg>
        </span>
      </footer>
    </section>
  );
}

function StatusBar() {
  const cell = 'flex items-center pl-px border border-[#d8d8d8] bg-linear-to-b from-[#fdfdfd] to-[#efefef] whitespace-nowrap';
  return (
    <footer className="relative flex gap-0.5 h-[22px] pt-0.5 shrink-0 bg-white">
      <span className={`${cell} w-[148px]`} />
      <span className={`${cell} w-[78px]`}><span><Sim>层高:2.8m</Sim></span></span>
      <span className={`${cell} w-[98px]`}><span><Sim>底标高:13.07m</Sim></span></span>
      <span className={`${cell} w-12`}><span><Sim>0</Sim></span></span>
      <span className={`${cell} flex-1`}>名称在当前层当前构件类型下不允许重名</span>

      {/* input method bar floats over the status bar */}
      <div className="absolute right-0 bottom-0 flex items-center gap-1.5 h-6 w-40 pl-2 border border-[#b7c8dc] bg-[#fbfdff] text-[#1f74c8]">
        <svg viewBox="0 0 28 28" className="absolute -left-[27px] -top-1 size-7" aria-hidden="true">
          <path d="M2 5l20-4 5 20-20 6z" fill="#f4531c" stroke="#d8430f" />
          <path d="M21 9C16 5 8 6 9 10c1 3 12 1 12 5 0 5-9 6-14 2" fill="none" stroke="#fff" strokeWidth="3.6" />
        </svg>
        <span className="text-[15px] font-bold">中</span>
        <svg viewBox="0 0 16 16" className="size-4 shrink-0"><circle cx="4" cy="6" r="2" fill="none" stroke="currentColor" strokeWidth="1.3" /><circle cx="10" cy="9" r="2" fill="currentColor" /><path d="M12 9c0 2-1 4-3 4" fill="none" stroke="currentColor" strokeWidth="1.5" /></svg>
        <svg viewBox="0 0 16 16" className="size-4 shrink-0"><rect x="5" y="0" width="6" height="10" rx="3" fill="currentColor" /><path d="M2.500 7c0 7 11 7 11 0M8 12v3M5 15h6" fill="none" stroke="currentColor" strokeWidth="1.5" /></svg>
        <svg viewBox="0 0 16 16" className="size-4 shrink-0"><rect x="0" y="2" width="16" height="12" rx="1.5" fill="currentColor" /><path d="M2 5.500h12M2 8.500h12" stroke="#fff" strokeWidth="1.5" strokeDasharray="2 1" /><path d="M4 11.500h8" stroke="#fff" strokeWidth="1.3" /></svg>
        <svg viewBox="0 0 16 16" className="size-4 shrink-0"><circle cx="6" cy="4" r="3" fill="#b5c1d3" /><path d="M0 15c0-8 12-8 12 0z" fill="#b5c1d3" /><path d="M8.500 10v5M10.500 10h4l-2 5" fill="none" stroke="#8797b0" strokeWidth="1.3" /></svg>
        <svg viewBox="0 0 16 16" className="size-4 shrink-0"><path d="M5 1q3 2.500 6 0l5 3-2 3.500-2-1V15H4V6.500l-2 1L0 4z" fill="currentColor" /></svg>
        <svg viewBox="0 0 16 16" className="size-4 shrink-0"><path d="M2.500 13.500L9 7" stroke="currentColor" strokeWidth="3.2" strokeLinecap="round" /><path d="M14 3.500L11.500 6 9.500 4 12 1.500C8.500 0 6 4 8 7s7 .5 6-3.500z" fill="currentColor" /></svg>
      </div>
    </footer>
  );
}

const taskIcons = [
  { name: '应用', art: (<><path d="M6 1h5v8a3 3 0 0 1-3 3H4a3 3 0 0 1-3-3V6a5 5 0 0 1 5-5zM15 1h3a5 5 0 0 1 5 5v5h-8a3 3 0 0 1-3-3V4a3 3 0 0 1 3-3zM16 12h4a3 3 0 0 1 3 3v3a5 5 0 0 1-5 5h-5v-8a3 3 0 0 1 3-3zM1 13h8a3 3 0 0 1 3 3v4a3 3 0 0 1-3 3H6a5 5 0 0 1-5-5z" fill="#e3e3e3" /><path d="M11.500 1v8c0 2-1 3-3 3M23 11.500h-8c-2 0-3-1-3-3M12.500 23v-8c0-2 1-3 3-3M1 12.500h8c2 0 3 1 3 3" fill="none" stroke="#000c0f" /></>) },
  { name: '浏览器', art: <path d="M21 4c-7-2-17 1-17 9s11 11 15 4c2-5-4-8-7-5-3 2-1 5 1 4M18 6C12 3 7 8 7 12c0 6 8 7 9 3" fill="none" stroke="#cfcfcf" strokeWidth="1.5" /> },
  { name: 'Edge', gap: true, art: <path d="M2 11C3 4 8 1 13 1c6 0 9 5 9 11H8c0 6 8 7 13 4v5C13 25 4 22 4 14c0-4 3-7 6-8-2 1-2 3-2 3h7c0-5-9-5-13 2z" fill="#1583e0" /> },
  { name: '商店', art: (<><path d="M8 6c0-5 7-5 7 0" fill="none" stroke="#fff" strokeWidth="1.5" /><path d="M2 6l20-1v17l-20-1z" fill="#fff" /><path d="M6 10l5-.5v4H6zM12 9.500l6-.5v4.500h-6zM6 14.500h5v4l-5-.5zM12 14.500h6V19l-6-.5z" fill="#000c0f" /></>) },
  { name: '文件资源管理器', art: (<><path d="M1 4h8l2 2h11v15H1z" fill="#f7d982" /><path d="M1 8h21v13H1z" fill="#fde9a9" /><path d="M5 13h14v9h-4v-4H9v4H5z" fill="#3da5e0" /></>) },
  { name: 'G', run: true, art: <path d="M23 3C14-1 2 3 1 13c0 10 14 13 19 5 3-6-2-10-6-9 3 2 2 6-1 6-4 0-5-6-1-8 4-1 7 0 8-1 2-1 1-2 3-3z" fill="#1f9ceb" /> },
  { name: '360', run: true, art: (<><circle cx="12" cy="12" r="10.5" fill="#62bd2c" stroke="#d9f0c8" /><path d="M7 12h10c0-7-10-7-10 1 0 6 8 5 9 2" fill="none" stroke="#fff" strokeWidth="2.6" /><path d="M1 18C5 8 15 1 23 2" fill="none" stroke="#e4f8d6" strokeWidth="1.3" /></>) },
  { name: '广联达', active: true, art: (<><rect width="24" height="24" rx="5" fill="#0f94f0" /><path d="M16 7.500C16 4 12 4 12 7.500V17C12 20 8 20 8 17.500M5 15.500C3.500 12 5 12 7.500 12H20" fill="none" stroke="#fff" strokeWidth="2" /></>) },
  { name: '记事', run: true, art: (<><rect width="24" height="24" rx="3" fill="#f49c1a" /><path d="M3 5l13-1 3 15-14 2z" fill="#fff3cf" /><path d="M6 9l7-1M6 12l6-1M7 15l4-.5" stroke="#a06a1c" /><path d="M21 2l-8 15" stroke="#7c4310" strokeWidth="2.4" /></>) },
];

function Taskbar() {
  return (
    <div className="flex items-stretch h-10 shrink-0 bg-[#000c0f] text-white">
      <button type="button" aria-label="开始" className="w-12 shrink-0 flex items-center justify-center bg-black">
        <svg viewBox="0 0 16 16" className="size-4"><path d="M0 2.300l6.500-.9v6H0zM7.500 1.200L16 0v7.500H7.500zM0 8.500h6.500v6L0 13.700zM7.500 8.500H16V16l-8.500-1.200z" fill="#fff" /></svg>
      </button>
      <label className="flex items-center w-[344px] shrink-0 pl-2 pr-3 bg-[#333]">
        <svg viewBox="0 0 22 22" className="size-[22px]" aria-hidden="true"><circle cx="11" cy="11" r="9" fill="none" stroke="#fff" strokeWidth="2.6" /></svg>
        <input aria-label="搜索" placeholder="在这里输入你要搜索的内容" className="flex-1 ml-1.5 bg-transparent text-sm outline-none placeholder:text-[#9a9a9a]" />
        <svg viewBox="0 0 16 16" className="size-4" aria-hidden="true"><path d="M5.500 .5h5v10h-5zM3.500 8v4.500h9V8M8 12.500v3M5 15.500h6" fill="none" stroke="#9a9a9a" /></svg>
      </label>
      <div className="flex items-stretch pl-px">
        {taskIcons.map((t) => (
          <React.Fragment key={t.name}>
            {t.gap && <span className="self-center w-1 h-4 ml-2 mr-[13px] border-x border-[#333c3e]" />}
            <button
              type="button"
              aria-label={t.name}
              className={`flex items-center justify-center border-b-2 ${t.active ? 'w-[49px] bg-[#2c383b]' : 'w-[41px] mx-1'} ${t.run || t.active ? 'border-[#76b9ed]' : 'border-transparent'}`}
            >
              <svg viewBox="0 0 24 24" className="size-6">{t.art}</svg>
            </button>
          </React.Fragment>
        ))}
      </div>
      <div className="ml-auto flex items-center">
        <p className="w-16 text-center text-[12px]/[17px]">53%<br />CPU使用</p>
        <div className="flex items-center gap-2 ml-2.5">
          <svg viewBox="0 0 16 16" className="size-4"><path d="M2 11l6-6 6 6" fill="none" stroke="#fff" strokeWidth="1.3" /></svg>
          <svg viewBox="0 0 16 16" className="size-4"><path d="M5.500 5.500h9v7h-9z" fill="none" stroke="#fff" /><path d="M7 7h6v4H7zM15 7.500h1v3h-1zM0 3h5v3L3.500 7.500h-2L0 6zM1 1h1v2H1zM3.500 1h1v2h-1zM2 7h1v3H2z" fill="#fff" /></svg>
          <svg viewBox="0 0 16 16" className="size-4"><path d="M2 14C2 7 7 3 14 3M5 14c0-5 4-8 9-8M8 14c0-3 3-5 6-5" fill="none" stroke="#ddd" strokeWidth="1.2" /><circle cx="12.5" cy="13" r="1.5" fill="#fff" /></svg>
          <svg viewBox="0 0 16 16" className="size-4"><path d="M.5 5.500h3l3-3v11l-3-3h-3zM8.500 6c1 1 1 3 0 4M10.500 4c2 2 2 6 0 8M13 2c3 3 3 9 0 12" fill="none" stroke="#fff" /></svg>
          <svg viewBox="0 0 24 14" className="w-6 h-3.5"><path d="M.5 1h22v12H.5z" fill="none" stroke="#fff" /><path d="M3 4h17M3 7h17" stroke="#fff" strokeDasharray="2 1" strokeWidth="1.3" /><path d="M6 10.500h11" stroke="#fff" /></svg>
          <span className="text-[13px]">中</span>
          <svg viewBox="0 0 28 28" className="size-4 ml-1.5"><path d="M2 5l20-4 5 20-20 6z" fill="#f4531c" /><path d="M21 9C16 5 8 6 9 10c1 3 12 1 12 5 0 5-9 6-14 2" fill="none" stroke="#fff" strokeWidth="3.6" /></svg>
        </div>
        <p className="w-[66px] ml-3.5 text-center text-[12px]/[19px]">15:23<br />2017/9/5</p>
        <button type="button" aria-label="通知" className="ml-4 mr-2.5">
          <svg viewBox="0 0 26 26" className="size-[26px]">
            <path d="M1 2h16v12H8l-3 3v-3H1z" fill="#fff" />
            <path d="M4 5.500h10M4 8.500h10M4 11.500h6" stroke="#000" />
            <circle cx="17" cy="17" r="8" fill="#2c2c2c" stroke="#999" />
            <text x="17" y="21" fill="#fff" textAnchor="middle" className="text-[11px] font-bold">2</text>
          </svg>
        </button>
        <span className="w-px h-10 mr-1 bg-[#555]" />
      </div>
    </div>
  );
}

export default function App() {
  return (
    <div className="flex flex-col h-screen overflow-hidden bg-[#f0f0f0] text-[12px]/[16px] text-black font-['Open_Sans','Noto_Sans_CJK_SC',sans-serif]">
      <TitleBar />
      <MenuBar />
      <MainToolbar />
      <div className="flex flex-1 min-h-0 gap-[5px]">
        <NavPanel />
        <main className="relative flex flex-col flex-1 min-w-0">
          <ComponentToolbar />
          <div className="flex flex-1 min-h-0">
            <ComponentList />
            <div className="flex flex-1 min-w-0 mr-1 border-r border-b border-[#a0a0a0] bg-white">
              <button type="button" className="self-start ml-1 w-[63px] h-5 border border-b-0 border-[#dcdcdc]">属性编辑</button>
              <div className="ml-auto mt-[26px] mb-1 mr-0.5 w-[17px] flex flex-col items-center bg-[#f0f0f0]">
                <svg viewBox="0 0 9 17" className="w-[9px] h-[17px] shrink-0"><path d="M1 11l3.500-4L8 11" fill="none" stroke="#505050" strokeWidth="1.8" /></svg>
                <span className="w-full h-[70%] bg-[#cdcdcd]" />
                <svg viewBox="0 0 9 17" className="w-[9px] h-[17px] shrink-0 mt-auto"><path d="M1 7l3.500 4L8 7" fill="none" stroke="#505050" strokeWidth="1.8" /></svg>
              </div>
            </div>
          </div>
          <SectionEditor />
        </main>
      </div>
      <StatusBar />
      <Taskbar />
    </div>
  );
}
